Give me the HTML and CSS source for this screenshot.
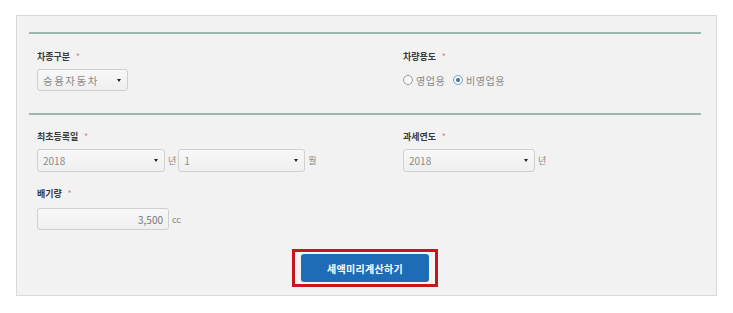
FILE: index.html
```html
<!DOCTYPE html>
<html lang="ko">
<head>
<meta charset="utf-8">
<link rel="stylesheet" href="styles.css">
</head>
<body>
<div class="panel">
  <div class="rule"></div>
  <div class="section sec1">
    <div class="field">
      <div class="label">차종구분 <span class="req">*</span></div>
      <div class="row">
        <div class="select w91"><span class="val wide">승용자동차</span><span class="arrow"></span></div>
      </div>
    </div>
    <div class="field">
      <div class="label">차량용도 <span class="req">*</span></div>
      <div class="row radios">
        <span class="radio"></span><span class="rtext">영업용</span>
        <span class="radio on"></span><span class="rtext">비영업용</span>
      </div>
    </div>
  </div>
  <div class="rule"></div>
  <div class="section sec2">
    <div class="field">
      <div class="label">최초등록일 <span class="req">*</span></div>
      <div class="row">
        <div class="select w128"><span class="val">2018</span><span class="arrow"></span></div>
        <span class="unit">년</span>
        <div class="select w127"><span class="val">1</span><span class="arrow"></span></div>
        <span class="unit">월</span>
      </div>
      <div class="label mt">배기량 <span class="req">*</span></div>
      <div class="row">
        <div class="input w132">3,500</div>
        <span class="unit">cc</span>
      </div>
    </div>
    <div class="field">
      <div class="label">과세연도 <span class="req">*</span></div>
      <div class="row">
        <div class="select w132"><span class="val">2018</span><span class="arrow"></span></div>
        <span class="unit">년</span>
      </div>
    </div>
  </div>
  <div class="actions">
    <div class="highlight"><button class="btn">세액미리계산하기</button></div>
  </div>
</div>
</body>
</html>
```

FILE: styles.css
```css
html, body {
  margin: 0;
  padding: 0;
  background: #ffffff;
  font-family: "Noto Sans CJK KR", "Noto Sans", sans-serif;
}
.panel {
  margin: 15px 0 0 16px;
  width: 701px;
  height: 281px;
  box-sizing: border-box;
  border: 1px solid #d9d9d9;
  background: #f2f2f2;
  padding: 16px 15px 0 12px;
}
.rule {
  height: 0;
  border-top: 2px solid #98b8b0;
}
.section {
  display: grid;
  grid-template-columns: 366px 1fr;
  padding-left: 8px;
}
.sec1 {
  padding-top: 17px;
  padding-bottom: 22px;
}
.sec2 {
  padding-top: 16px;
}
.label {
  height: 12px;
  line-height: 12px;
  font-size: 9px;
  font-weight: 700;
  color: #3a3a3a;
  margin-bottom: 6px;
}
.label.mt {
  margin-top: 16px;
  margin-bottom: 8px;
}
.req {
  color: #d48a8a;
  font-weight: 400;
  margin-left: 3px;
}
.row {
  display: flex;
  align-items: center;
}
.select, .input {
  box-sizing: border-box;
  height: 23px;
  border: 1px solid #d0d0d0;
  border-radius: 3px;
  background: linear-gradient(#f8f8f8, #efefef);
  display: flex;
  align-items: center;
  padding: 0 5px;
  font-size: 10px;
  color: #8a8a8a;
}
.sec1 .select { height: 22px; }
.select .val { flex: 1; }
.val.wide { letter-spacing: 1.5px; font-size: 10.5px; }
.arrow {
  width: 0;
  height: 0;
  border-left: 2px solid transparent;
  border-right: 2px solid transparent;
  border-top: 3px solid #222;
  margin-right: 1px;
}
.input {
  justify-content: flex-end;
  height: 22px;
  color: #777;
}
.w91 { width: 91px; }
.w127 { width: 127px; }
.w128 { width: 128px; }
.w132 { width: 132px; }
.unit {
  font-size: 9px;
  color: #888;
  margin: 0 2px 0 3px;
}
.radios {
  height: 22px;
  gap: 0;
}
.radio {
  width: 8px;
  height: 8px;
  border: 1px solid #9a9a9a;
  border-radius: 50%;
  background: #fafafa;
  box-sizing: content-box;
  margin: 0 3px 0 0;
  display: inline-flex;
  align-items: center;
  justify-content: center;
}
.radio.on {
  border-color: #6a9ec8;
}
.radio.on::after {
  content: "";
  width: 4px;
  height: 4px;
  border-radius: 50%;
  background: #3a6e9e;
}
.rtext {
  font-size: 10px;
  color: #8a8a8a;
  letter-spacing: 0.5px;
  margin-right: 8px;
}
.actions {
  display: flex;
  justify-content: center;
  padding-top: 19px;
}
.highlight {
  border: 3px solid #c4161c;
  padding: 2px 6px;
  background: #f4f4f4;
}
.btn {
  display: block;
  width: 128px;
  height: 28px;
  border: none;
  border-radius: 3px;
  background: #1f6cb6;
  color: #ffffff;
  font-family: "Noto Sans CJK KR", "Noto Sans", sans-serif;
  font-size: 10px;
  font-weight: 700;
  letter-spacing: 0.3px;
  padding: 0;
}
```
